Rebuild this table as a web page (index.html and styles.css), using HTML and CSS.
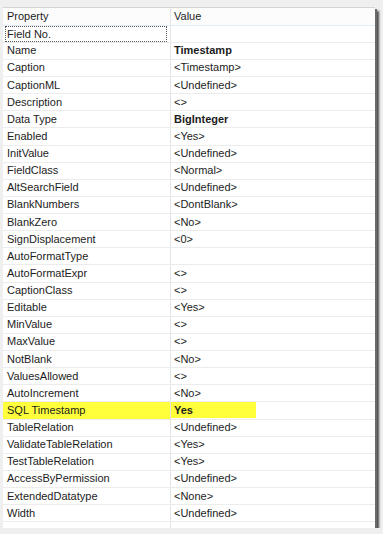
FILE: index.html
```html
<!DOCTYPE html>
<html>
<head>
    <title>Field Properties</title>
    <link rel="stylesheet" href="styles.css">
</head>
<body>
    <div class="sheet">
        <table class="props">
            <tr class="head">
                <td class="name">Property</td>
                <td class="value">Value</td>
            </tr>
            <tr class="focus">
                <td class="name"><span class="focusbox">Field No.</span></td>
                <td class="value"></td>
            </tr>
            <tr><td class="name">Name</td><td class="value strong">Timestamp</td></tr>
            <tr><td class="name">Caption</td><td class="value">&lt;Timestamp&gt;</td></tr>
            <tr><td class="name">CaptionML</td><td class="value">&lt;Undefined&gt;</td></tr>
            <tr><td class="name">Description</td><td class="value">&lt;&gt;</td></tr>
            <tr><td class="name">Data Type</td><td class="value strong">BigInteger</td></tr>
            <tr><td class="name">Enabled</td><td class="value">&lt;Yes&gt;</td></tr>
            <tr><td class="name">InitValue</td><td class="value">&lt;Undefined&gt;</td></tr>
            <tr><td class="name">FieldClass</td><td class="value">&lt;Normal&gt;</td></tr>
            <tr><td class="name">AltSearchField</td><td class="value">&lt;Undefined&gt;</td></tr>
            <tr><td class="name">BlankNumbers</td><td class="value">&lt;DontBlank&gt;</td></tr>
            <tr><td class="name">BlankZero</td><td class="value">&lt;No&gt;</td></tr>
            <tr><td class="name">SignDisplacement</td><td class="value">&lt;0&gt;</td></tr>
            <tr><td class="name">AutoFormatType</td><td class="value"></td></tr>
            <tr><td class="name">AutoFormatExpr</td><td class="value">&lt;&gt;</td></tr>
            <tr><td class="name">CaptionClass</td><td class="value">&lt;&gt;</td></tr>
            <tr><td class="name">Editable</td><td class="value">&lt;Yes&gt;</td></tr>
            <tr><td class="name">MinValue</td><td class="value">&lt;&gt;</td></tr>
            <tr><td class="name">MaxValue</td><td class="value">&lt;&gt;</td></tr>
            <tr><td class="name">NotBlank</td><td class="value">&lt;No&gt;</td></tr>
            <tr><td class="name">ValuesAllowed</td><td class="value">&lt;&gt;</td></tr>
            <tr><td class="name">AutoIncrement</td><td class="value">&lt;No&gt;</td></tr>
            <tr class="marked">
                <td class="name">SQL Timestamp</td>
                <td class="value strong"><span class="markfill">Yes</span></td>
            </tr>
            <tr><td class="name">TableRelation</td><td class="value">&lt;Undefined&gt;</td></tr>
            <tr><td class="name">ValidateTableRelation</td><td class="value">&lt;Yes&gt;</td></tr>
            <tr><td class="name">TestTableRelation</td><td class="value">&lt;Yes&gt;</td></tr>
            <tr><td class="name">AccessByPermission</td><td class="value">&lt;Undefined&gt;</td></tr>
            <tr><td class="name">ExtendedDatatype</td><td class="value">&lt;None&gt;</td></tr>
            <tr><td class="name">Width</td><td class="value">&lt;Undefined&gt;</td></tr>
            <tr><td class="name"></td><td class="value"></td></tr>
        </table>
    </div>
</body>
</html>
```

FILE: styles.css
```css
html { overflow: hidden; }
body
{
    margin: 0;
    padding: 7px 0 0 3px;
    background-color: #efefef;
    font-family: "Liberation Sans", Arial, sans-serif;
    font-size: 11px;
    color: #1c1c1c;
}
.sheet
{
    width: 372px;
    height: 520px;
    overflow: hidden;
    background-color: #fff;
    border-top: 1px solid #d4d4d4;
    box-shadow: 2px 2px 0 #6a6a6a, 4px 4px 2px #4a4a4a;
}
table.props
{
    width: 100%;
    border-collapse: collapse;
    table-layout: fixed;
}
.props tr
{
    height: 17.13px;
}
.props td
{
    padding: 0;
    border-bottom: 1px solid #ececec;
    white-space: nowrap;
    overflow: hidden;
    line-height: 15px;
}
.props td.name
{
    width: 163px;
    padding-left: 4px;
    border-right: 1px solid #e4e4e4;
}
.props td.value
{
    padding-left: 3px;
}
.props tr.head td
{
    border-bottom-color: #e2ecf6;
    background-color: #fcfcfc;
}
.props tr.focus td.name
{
    padding-left: 2px;
}
.focusbox
{
    display: block;
    height: 14px;
    line-height: 14px;
    padding-left: 1px;
    margin-right: 3px;
    border: 1px dotted #555;
}
.strong
{
    font-weight: bold;
}
.props tr.marked td.name
{
    background-color: #ffff3c;
}
.markfill
{
    display: block;
    width: 82px;
    margin-left: -3px;
    padding-left: 3px;
    line-height: 16px;
    background-color: #ffff3c;
}
```
